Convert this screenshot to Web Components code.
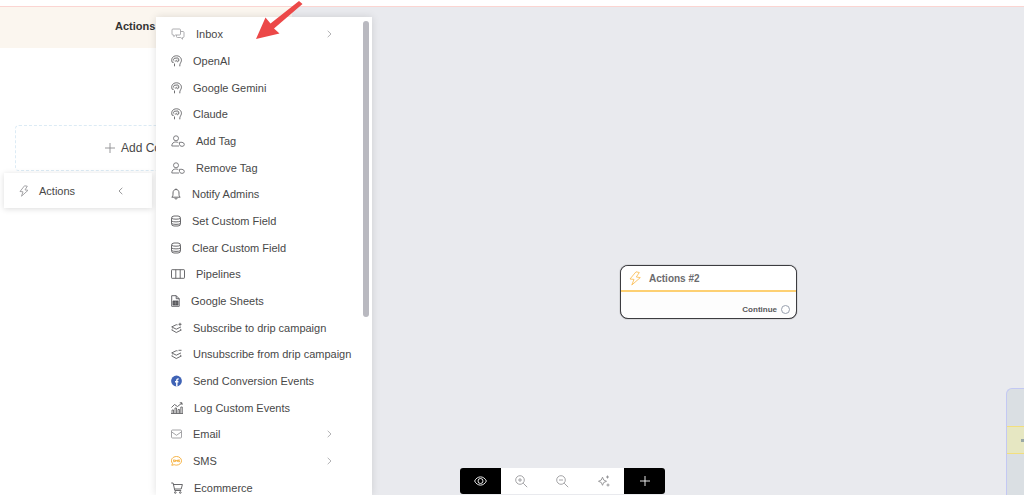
<!DOCTYPE html>
<html lang="en">
<head>
<meta charset="utf-8">
<title>Flow builder</title>
<style>
  html, body { height: 100%; }
  body {
    margin: 0;
    overflow: hidden;
    background: #fff;
    color: #484848;
    font-family: "Liberation Sans", Arial, sans-serif;
    font-size: 11px;
  }
</style>
</head>
<body>
<flow-builder>
  <side-panel slot="panel" heading="Actions">
    <fly-out>Actions</fly-out>
  </side-panel>
  <action-menu slot="menu">
    <menu-item icon="chat" more>Inbox</menu-item>
    <menu-item icon="brain">OpenAI</menu-item>
    <menu-item icon="brain">Google Gemini</menu-item>
    <menu-item icon="brain">Claude</menu-item>
    <menu-item icon="tag">Add Tag</menu-item>
    <menu-item icon="tag">Remove Tag</menu-item>
    <menu-item icon="bell">Notify Admins</menu-item>
    <menu-item icon="database">Set Custom Field</menu-item>
    <menu-item icon="database">Clear Custom Field</menu-item>
    <menu-item icon="columns">Pipelines</menu-item>
    <menu-item icon="sheet">Google Sheets</menu-item>
    <menu-item icon="layersPlus">Subscribe to drip campaign</menu-item>
    <menu-item icon="layersMinus">Unsubscribe from drip campaign</menu-item>
    <menu-item icon="facebook">Send Conversion Events</menu-item>
    <menu-item icon="chart">Log Custom Events</menu-item>
    <menu-item icon="mail" more>Email</menu-item>
    <menu-item icon="sms" more>SMS</menu-item>
    <menu-item icon="cart">Ecommerce</menu-item>
  </action-menu>
  <flow-node slot="canvas" heading="Actions #2">Continue</flow-node>
  <mini-map slot="canvas"></mini-map>
  <zoom-bar slot="tools"></zoom-bar>
</flow-builder>

<script>
// name: [width, height, color, inner markup]
const icons = {
  chat: [14, 12, '#a5a5a8', '<path d="M2 1h6.500q1 0 1 1v4q0 1-1 1H4.500L2.800 8.600V7H2Q1 7 1 6V2Q1 1 2 1zM9.500 3.500H12q1 0 1 1v4q0 1-1 1h-.5v1.700L9.800 9.500H6.500q-1 0-1-1V7"/>'],
  brain: [11, 12, '#5d5d60', '<path d="M1.200 7.300C-.3 3.500 2 .8 5.500.8s5.500 3 4.800 5.400C9.900 7.800 8.600 8.400 8.800 11.300M1.200 7.300h1.500M3.500 11.300V8.500M2.700 5.500C2 3.800 3.500 2.700 5 3.200c1.400-.9 3.200.3 2.800 1.800.2 1.700-1.600 2-2.100 1.500M3.800 6c1.400.3 2.200-.4 2.200-1.300"/>'],
  tag: [14, 12, '#717174', '<circle cx="5" cy="3.300" r="2.500"/><path d="M8 11H.8c0-2.800 1.700-4 4-4 1 0 2 .2 2.600.8M8.500 7.300h2.500q2.300.3 2.300 2.200t-2.300 1.900q-2.500-.2-2.500-2z"/>'],
  bell: [10, 12, '#59595c', '<path d="M5 .5v1M.8 9.200h8.400C7.800 8 8 6.700 8 5 8 2.700 6.800 1.500 5 1.500S2 2.700 2 5c0 1.700.2 3-1.200 4.200zM3.800 10c.2 1.500 2.200 1.500 2.400 0"/>'],
  database: [10, 12, '#59595c', '<rect x=".5" y="1" width="9" height="10" rx="2.500"/><path d="M.5 3.300C2 4.500 8 4.500 9.500 3.300M.5 6C2 7.200 8 7.200 9.500 6M.5 8.500c1.500 1.200 7.500 1.200 9 0"/>'],
  columns: [14, 10, '#59595c', '<rect x=".5" y=".7" width="13" height="8.600" rx=".6"/><path d="M4.800.7v8.600M9.200.7v8.600"/>'],
  sheet: [9, 12, '#55555a', '<path d="M.7 11.300V.7h4.500l3 3v7.600zM5.200.7v3h3"/><path d="M2 6h5v4H2z" fill="currentColor"/><path d="M2.300 8h4.400M4.500 6.300v3.400" stroke="#aaa" stroke-width=".4"/>'],
  layersPlus: [11, 12, '#59595c', '<path d="M6.500 2.900 5.300 2.700.7 4.900l4.600 2.300 4.700-2.300M.7 7.700l1-.9M.7 7.900l4.600 2.600L10.300 8l-1.200-1M9 .8v3M7.500 2.300h3"/>'],
  layersMinus: [11, 12, '#59595c', '<path d="M6.500 2.900 5.300 2.700.7 4.900l4.600 2.300 4.700-2.300M.7 7.700l1-.9M.7 7.900l4.600 2.600L10.300 8l-1.200-1M7.500 2.300h3"/>'],
  facebook: [11, 12, '#3f63b5', '<circle cx="5.500" cy="6" r="5.400" fill="currentColor" stroke="none"/><path d="M5.800 11.500V5.300c0-1 .6-1.500 1.800-1.300M4 6.700h3.400" stroke="#fff" stroke-width="1.400"/>'],
  chart: [12, 12, '#59595c', '<path d="M.5 5.500 3.500 2.500 6.500 4.500 11 1M8.800.8H11V3"/><path d="M1 11.500V8h1.500v3.500M4 11.500V6h1.500v5.500M7 11.500V7.500h1.500v4M9.800 11.500V5h1.500v6.500M0 11.500h12" stroke-width=".8"/>'],
  mail: [11, 10, '#9a9a9d', '<rect x=".5" y="1" width="10" height="8" rx="1"/><path d="m.8 3 4.700 3.300L10.200 3"/>'],
  sms: [11, 12, '#f5ac32', '<path d="M5.500 1.500c2.800 0 5 1.900 5 4.300s-2.200 4.300-5 4.300c-.8 0-1.600-.1-2.300-.4L.8 10.300l.7-2C-1.300 5 1.700 1.500 5.500 1.500z"/><path d="M3.700 4.900H2.500v.9h1v.9H2.200M4.600 6.900v-2l.9 1.200.9-1.200v2M8.700 4.900H7.500v.9h1v.9H7.200"/>'],
  cart: [12, 12, '#59595c', '<path d="M.2 1h1.900l1.700 7.500h6.400M2.400 2.500h9L10.200 7H3.500"/><circle cx="4.300" cy="10.500" r=".8"/><circle cx="9.300" cy="10.500" r=".8"/>'],
  bolt: [10, 12, '#9b9b9e', '<path d="M5.500.8 1 6.500l3 .3L2.500 11.200 9 5.300l-3-.4L8.300 1.200z"/>'],
  boltBig: [12, 15, '#fbc05a', '<path d="M7 .8 1 8l4 .4L2.800 14 11.300 6.600 7.300 6l3-4.500z"/>'],
  right: [5, 8, '#aaaaad', '<path d="m.7.8 3.300 3.200L.7 7.200"/>'],
  left: [5, 8, '#8d8d90', '<path d="M4.300.8 1 4l3.300 3.200"/>'],
  plus: [10, 10, '#8d8d90', '<path d="M5 0v10M0 5h10"/>'],
  plusWhite: [10, 10, '#fff', '<path d="M5 0v10M0 5h10"/>'],
  eye: [13, 10, '#fff', '<path d="M.6 5C3.200-.5 9.800-.5 12.400 5 9.800 10.500 3.200 10.500.6 5z"/><circle cx="6.500" cy="5" r="2.500"/>'],
  zoomIn: [13, 13, '#9a9a9d', '<circle cx="5" cy="5" r="4.300"/><path d="m8.200 8.200 4 4M5 3v4M3 5h4"/>'],
  zoomOut: [13, 13, '#9a9a9d', '<circle cx="5" cy="5" r="4.300"/><path d="m8.200 8.200 4 4M3 5h4"/>'],
  sparkle: [12, 12, '#8f8f92', '<path d="M4.500 2.200 5.700 5 8.500 6.300 5.700 7.500 4.500 10.300 3.300 7.500.5 6.300 3.300 5zM9.500.5v3M8 2h3M10 8.500v3M8.500 10h3"/>']
}

function icon(name){
  const [w, h, color, body] = icons[name]
  return `<svg width="${w}" height="${h}" viewBox="0 0 ${w} ${h}" style="color:${color};flex:none" fill="none" stroke="currentColor" stroke-width=".9" stroke-linejoin="round" aria-hidden="true">${body}</svg>`
}

const baseCSS = `
  :host, * { box-sizing: border-box; }
  button {
    margin: 0;
    padding: 0;
    border: 0;
    background: none;
    color: inherit;
    font: inherit;
    text-align: left;
    cursor: pointer;
  }
`

class FlowBuilder extends HTMLElement {
  constructor() {
    super()
    this.attachShadow({ mode: 'open' }).innerHTML = `
      <style>
        ${baseCSS}
        :host {
          display: flex;
          flex-direction: column;
          position: relative;
          height: 100vh;
          padding-top: 6px;
        }
        .work {
          display: flex;
          flex: 1;
          min-height: 0;
          border-top: 1px solid #fbd5d2;
        }
        main {
          flex: 1;
          position: relative;
          overflow: hidden;
          background: #e9eaee;
        }
        .menu {
          position: absolute;
          top: 17px;
          bottom: 0;
          left: 156px;
          display: flex;
        }
        .tools {
          position: absolute;
          bottom: 1px;
          left: 460px;
        }
        .arrow {
          position: absolute;
          top: 0;
          left: 254px;
        }
      </style>
      <div class="work">
        <slot name="panel"></slot>
        <main><slot name="canvas"></slot></main>
      </div>
      <div class="menu"><slot name="menu"></slot></div>
      <div class="tools"><slot name="tools"></slot></div>
      <svg class="arrow" width="50" height="42" viewBox="0 0 50 42" aria-hidden="true">
        <path d="M2 39 11.500 17.500 16.500 23.500 45 1 48.500 4 20 28.500 25.500 33.500z" fill="#ec4848"/>
      </svg>
    `
  }
}

class SidePanel extends HTMLElement {
  connectedCallback() {
    this.attachShadow({ mode: 'open' }).innerHTML = `
      <style>
        ${baseCSS}
        :host {
          display: block;
          flex: none;
          width: 292px;
          background: #fff;
        }
        header {
          height: 41px;
          padding: 12px 0 0 115px;
          background: #fbf6ef;
        }
        h1 {
          margin: 0;
          font-size: 11px;
          line-height: 14px;
          color: #333;
        }
        .add {
          display: flex;
          align-items: center;
          gap: 6px;
          width: 262px;
          height: 46px;
          margin: 77px 15px 2px;
          padding-left: 89px;
          border: 1px dashed #dcebf5;
          border-radius: 4px;
          font-size: 12px;
        }
      </style>
      <header><h1>${this.getAttribute('heading')}</h1></header>
      <button class="add">${icon('plus')}Add Content</button>
      <slot></slot>
    `
  }
}

class FlyOut extends HTMLElement {
  constructor() {
    super()
    this.attachShadow({ mode: 'open' }).innerHTML = `
      <style>
        ${baseCSS}
        :host {
          display: block;
          width: 148px;
          margin-left: 4px;
        }
        button {
          display: flex;
          align-items: center;
          gap: 10px;
          width: 100%;
          height: 35px;
          padding: 0 29px 0 15px;
          background: #fff;
          box-shadow: 0 1px 6px rgba(0, 0, 0, .14);
        }
        span { flex: 1; }
      </style>
      <button>${icon('bolt')}<span><slot></slot></span>${icon('left')}</button>
    `
  }
}

class ActionMenu extends HTMLElement {
  constructor() {
    super()
    this.attachShadow({ mode: 'open' }).innerHTML = `
      <style>
        ${baseCSS}
        :host {
          display: flex;
          width: 216px;
          padding: 4px 3px 0 0;
          overflow: hidden;
          background: #fff;
          box-shadow: 0 0 8px rgba(0, 0, 0, .12);
        }
        nav {
          flex: 1;
          min-width: 0;
          display: grid;
          grid-template-columns: 100%;
          grid-auto-rows: 1fr;
          height: 480px;
        }
        .thumb {
          flex: none;
          width: 6px;
          height: 296px;
          border-radius: 3px;
          background: #b9b9c0;
        }
      </style>
      <nav><slot></slot></nav>
      <div class="thumb"></div>
    `
  }
}

class MenuItem extends HTMLElement {
  connectedCallback() {
    this.attachShadow({ mode: 'open' }).innerHTML = `
      <style>
        ${baseCSS}
        :host { display: flex; }
        button {
          display: flex;
          align-items: center;
          gap: 11px;
          width: 100%;
          padding: 0 31px 0 15px;
          white-space: nowrap;
        }
        button:hover { background: #f6f6f8; }
        span {
          flex: 1;
          min-width: 0;
        }
      </style>
      <button>${icon(this.getAttribute('icon'))}<span><slot></slot></span>${this.hasAttribute('more') ? icon('right') : ''}</button>
    `
  }
}

class FlowNode extends HTMLElement {
  connectedCallback() {
    // spot of the node on the free canvas
    this.attachShadow({ mode: 'open' }).innerHTML = `
      <style>
        ${baseCSS}
        :host {
          display: block;
          position: absolute;
          top: 258px;
          left: 328px;
          width: 177px;
          border: 1px solid #3c3c40;
          border-radius: 8px;
          background: #fdfdfd;
          box-shadow: 0 0 1px 0 #3c3c40;
          font-weight: bold;
          color: #6b6b6e;
        }
        header {
          display: flex;
          align-items: center;
          gap: 8px;
          height: 26px;
          padding-left: 8px;
          border-bottom: 2px solid #fdd073;
          border-radius: 7px 7px 0 0;
          background: #fff;
          font-size: 10px;
        }
        footer {
          display: flex;
          align-items: center;
          justify-content: flex-end;
          gap: 4px;
          height: 26px;
          padding: 9px 6px 0 0;
          font-size: 8px;
          color: #58585b;
        }
        i {
          width: 9px;
          height: 9px;
          border: 1px solid #98a0ae;
          border-radius: 50%;
          background: #fff;
        }
      </style>
      <header>${icon('boltBig')}<span>${this.getAttribute('heading')}</span></header>
      <footer><slot></slot><i></i></footer>
    `
  }
}

class MiniMap extends HTMLElement {
  constructor() {
    super()
    this.attachShadow({ mode: 'open' }).innerHTML = `
      <style>
        ${baseCSS}
        :host {
          display: block;
          position: absolute;
          top: 381px;
          right: 0;
          bottom: 0;
          width: 18px;
          padding-top: 37px;
          border: 1px solid #c3c8f3;
          border-width: 1px 0 0 1px;
          border-radius: 6px 0 0 0;
          background: #dadfe3;
        }
        .view {
          display: flex;
          align-items: center;
          justify-content: flex-end;
          height: 28px;
          border: 1px solid #f3df7e;
          border-width: 1px 0;
          background: #e6e7c2;
        }
        .dot {
          width: 3px;
          height: 3px;
          background: #9aa9a6;
        }
      </style>
      <div class="view"><div class="dot"></div></div>
    `
  }
}

class ZoomBar extends HTMLElement {
  constructor() {
    super()
    this.attachShadow({ mode: 'open' }).innerHTML = `
      <style>
        ${baseCSS}
        :host {
          display: flex;
          height: 26px;
          overflow: hidden;
          border-radius: 3px;
          background: #fff;
        }
        button {
          display: flex;
          align-items: center;
          justify-content: center;
          width: 41px;
        }
        .dark { background: #000; }
      </style>
      <button class="dark" aria-label="Preview">${icon('eye')}</button>
      <button aria-label="Zoom in">${icon('zoomIn')}</button>
      <button aria-label="Zoom out">${icon('zoomOut')}</button>
      <button aria-label="Arrange">${icon('sparkle')}</button>
      <button class="dark" aria-label="Add">${icon('plusWhite')}</button>
    `
  }
}

customElements.define('flow-builder', FlowBuilder)
customElements.define('side-panel', SidePanel)
customElements.define('fly-out', FlyOut)
customElements.define('action-menu', ActionMenu)
customElements.define('menu-item', MenuItem)
customElements.define('flow-node', FlowNode)
customElements.define('mini-map', MiniMap)
customElements.define('zoom-bar', ZoomBar)
</script>
</body>
</html>
